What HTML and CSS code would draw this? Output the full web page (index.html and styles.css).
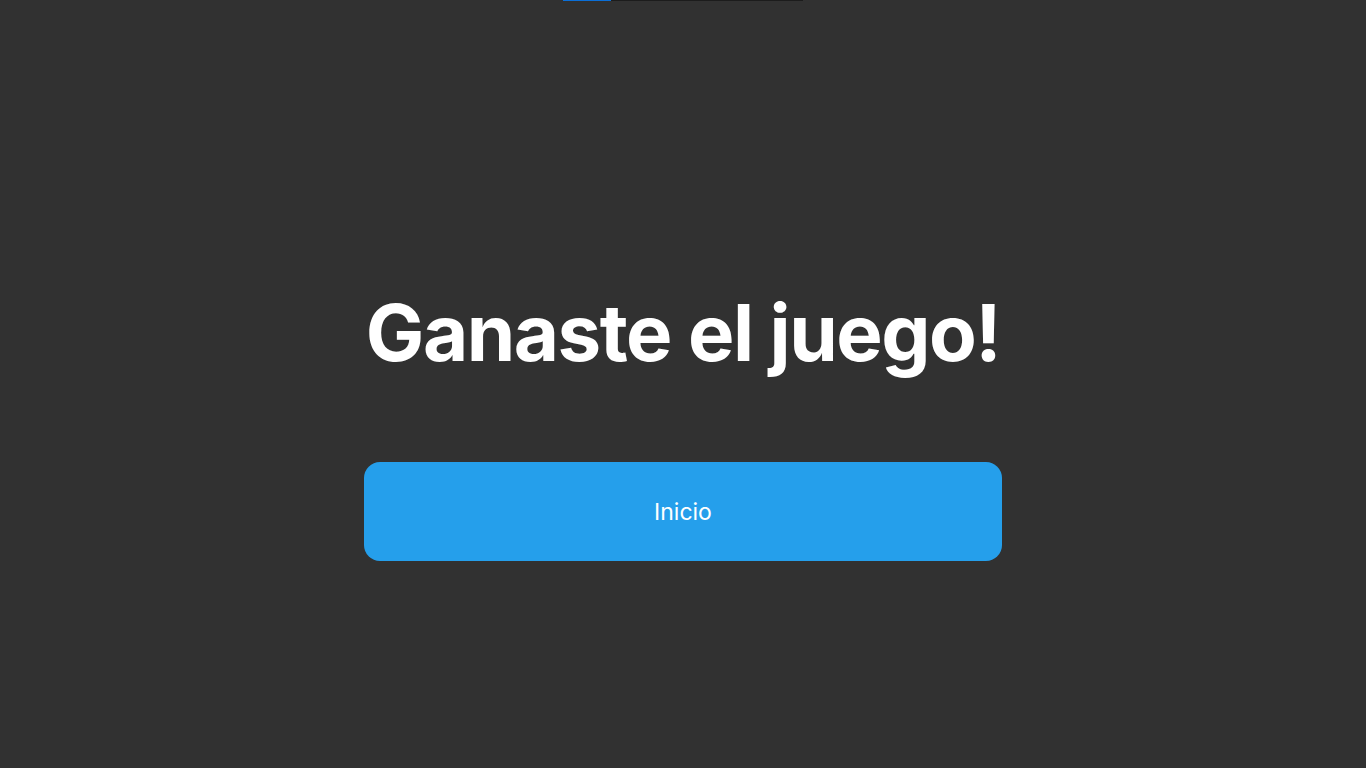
FILE: index.html
```html
<!DOCTYPE html>
<html lang="es">
<head>
<meta charset="utf-8">
<title>Ganaste el juego!</title>
<link rel="stylesheet" href="styles.css">
</head>
<body>
<div class="progress"><div class="progress-fill" style="width:20%"></div></div>
<main class="screen">
  <h1 class="title">Ganaste el juego!</h1>
  <button class="btn-home" type="button">Inicio</button>
</main>
</body>
</html>
```
FILE: styles.css
```css
* { box-sizing: border-box; }
html, body { margin: 0; padding: 0; height: 100%; }
body {
  background: #313131;
  font-family: Inter, "Noto Sans", sans-serif;
  color: #fff;
  position: relative;
  overflow: hidden;
}
.progress {
  position: absolute;
  top: 0;
  left: 563px;
  width: 240px;
  height: 1px;
  background: #1c1c1c;
}
.progress-fill {
  height: 100%;
  background: #0b6fd8;
}
.screen {
  display: flex;
  flex-direction: column;
  align-items: center;
  padding-top: 283px;
}
.title {
  margin: 0;
  font-size: 78px;
  font-weight: 700;
  line-height: 99px;
  letter-spacing: -1.5px;
}
.btn-home {
  margin-top: 80px;
  width: 638px;
  height: 99px;
  border: none;
  border-radius: 16px;
  background: #259feb;
  color: #fff;
  font-family: Inter, "Noto Sans", sans-serif;
  font-size: 23px;
  font-weight: 400;
}
```
